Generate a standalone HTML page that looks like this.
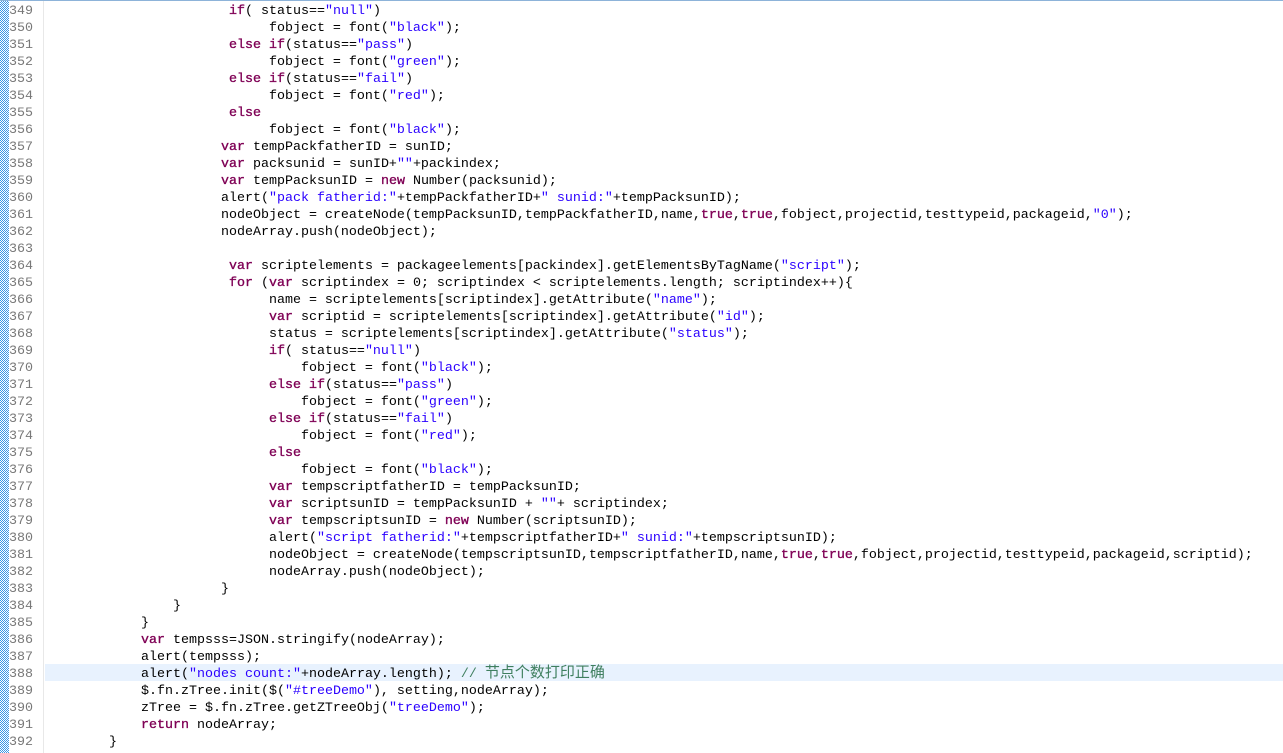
<!DOCTYPE html>
<html><head><meta charset="utf-8">
<style>
html,body{margin:0;padding:0;width:1283px;height:753px;overflow:hidden;background:#fff}
#top{position:absolute;left:0;top:0;width:1283px;height:1px;background:#8db3d9}
#strip{position:absolute;left:0;top:1px;width:9px;height:752px;background-color:#fff;background-image:repeating-conic-gradient(#3c96e6 0 25%,#fff 0 50%);background-size:2px 2px}
#rule{position:absolute;left:43px;top:1px;width:1px;height:752px;background:#e8e8e8}
#hl{position:absolute;left:45px;top:664px;width:1238px;height:17px;background:#e8f2fe}
#nums{position:absolute;left:9px;top:3px;font:13.33px/17px "Liberation Mono",monospace;color:#787878;white-space:pre;margin:0}
#code{position:absolute;left:45px;top:3px;font:13.33px/17px "Liberation Mono","Noto Sans CJK SC",monospace;color:#000;white-space:pre;margin:0}
b{color:#7f0055;font-weight:normal;-webkit-text-stroke:0.35px #7f0055}
i{color:#2a00ff;font-style:normal}
u{color:#3f7f5f;text-decoration:none}
u span{font:15px/17px "Noto Sans CJK SC","WenQuanYi Zen Hei",sans-serif;line-height:0}
</style></head><body>
<div id="top"></div>
<div id="strip"></div>
<div id="rule"></div>
<div id="hl"></div>
<pre id="nums">349
350
351
352
353
354
355
356
357
358
359
360
361
362
363
364
365
366
367
368
369
370
371
372
373
374
375
376
377
378
379
380
381
382
383
384
385
386
387
388
389
390
391
392</pre>
<pre id="code">                       <b>if</b>( status==<i>"null"</i>)
                            fobject = font(<i>"black"</i>);
                       <b>else</b> <b>if</b>(status==<i>"pass"</i>)
                            fobject = font(<i>"green"</i>);
                       <b>else</b> <b>if</b>(status==<i>"fail"</i>)
                            fobject = font(<i>"red"</i>);
                       <b>else</b>
                            fobject = font(<i>"black"</i>);
                      <b>var</b> tempPackfatherID = sunID;
                      <b>var</b> packsunid = sunID+<i>""</i>+packindex;
                      <b>var</b> tempPacksunID = <b>new</b> Number(packsunid);
                      alert(<i>"pack fatherid:"</i>+tempPackfatherID+<i>" sunid:"</i>+tempPacksunID);
                      nodeObject = createNode(tempPacksunID,tempPackfatherID,name,<b>true</b>,<b>true</b>,fobject,projectid,testtypeid,packageid,<i>"0"</i>);
                      nodeArray.push(nodeObject);

                       <b>var</b> scriptelements = packageelements[packindex].getElementsByTagName(<i>"script"</i>);
                       <b>for</b> (<b>var</b> scriptindex = 0; scriptindex &lt; scriptelements.length; scriptindex++){
                            name = scriptelements[scriptindex].getAttribute(<i>"name"</i>);
                            <b>var</b> scriptid = scriptelements[scriptindex].getAttribute(<i>"id"</i>);
                            status = scriptelements[scriptindex].getAttribute(<i>"status"</i>);
                            <b>if</b>( status==<i>"null"</i>)
                                fobject = font(<i>"black"</i>);
                            <b>else</b> <b>if</b>(status==<i>"pass"</i>)
                                fobject = font(<i>"green"</i>);
                            <b>else</b> <b>if</b>(status==<i>"fail"</i>)
                                fobject = font(<i>"red"</i>);
                            <b>else</b>
                                fobject = font(<i>"black"</i>);
                            <b>var</b> tempscriptfatherID = tempPacksunID;
                            <b>var</b> scriptsunID = tempPacksunID + <i>""</i>+ scriptindex;
                            <b>var</b> tempscriptsunID = <b>new</b> Number(scriptsunID);
                            alert(<i>"script fatherid:"</i>+tempscriptfatherID+<i>" sunid:"</i>+tempscriptsunID);
                            nodeObject = createNode(tempscriptsunID,tempscriptfatherID,name,<b>true</b>,<b>true</b>,fobject,projectid,testtypeid,packageid,scriptid);
                            nodeArray.push(nodeObject);
                      }
                }
            }
            <b>var</b> tempsss=JSON.stringify(nodeArray);
            alert(tempsss);
            alert(<i>"nodes count:"</i>+nodeArray.length); <u>// <span>节点个数打印正确</span></u>
            $.fn.zTree.init($(<i>"#treeDemo"</i>), setting,nodeArray);
            zTree = $.fn.zTree.getZTreeObj(<i>"treeDemo"</i>);
            <b>return</b> nodeArray;
        }</pre>
</body></html>
